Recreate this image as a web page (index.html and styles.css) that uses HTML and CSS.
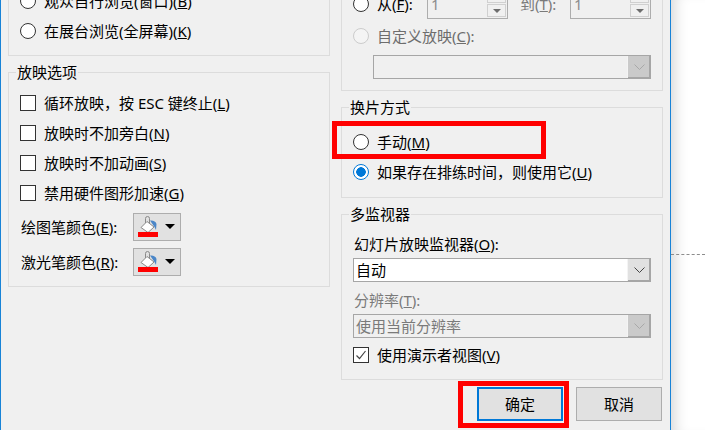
FILE: index.html
```html
<!DOCTYPE html>
<html lang="zh-CN">
<head>
  <meta charset="UTF-8">
  <title>设置放映方式</title>
  <link rel="stylesheet" href="styles.css">
</head>
<body>
  <div class="dialog">
    <div class="columns">
      <div class="col col-left">
        <div class="group group-cut">
          <div class="row"><span class="radio"></span>观众自行浏览(窗口)(<u>B</u>)</div>
          <div class="row"><span class="radio"></span>在展台浏览(全屏幕)(<u>K</u>)</div>
        </div>

        <fieldset class="group">
          <legend>放映选项</legend>
          <div class="inner-options">
            <div class="row"><span class="check"></span>循环放映，按 ESC 键终止(<u>L</u>)</div>
            <div class="row"><span class="check"></span>放映时不加旁白(<u>N</u>)</div>
            <div class="row"><span class="check"></span>放映时不加动画(<u>S</u>)</div>
            <div class="row"><span class="check"></span>禁用硬件图形加速(<u>G</u>)</div>
            <div class="color-row">
              <span class="color-label">绘图笔颜色(<u>E</u>):</span>
              <button class="color-btn">
                <svg class="bucket" width="22" height="23" viewBox="0 0 22 23">
                  <path d="M13 5.500C16 5 19 6.500 19.500 9L19 15L17.500 12Z" fill="#4a86c8"/>
                  <path d="M4 12.500L10 6.500L17 12L11 17.500Z" fill="#fff" stroke="#8a8a8a"/>
                  <path d="M8.500 8V3.500a2 2 0 0 1 4 0V8" fill="none" stroke="#8a8a8a"/>
                  <rect x="1" y="17" width="20" height="5" fill="#f00"/>
                </svg>
                <span class="caret"></span>
              </button>
            </div>
            <div class="color-row">
              <span class="color-label">激光笔颜色(<u>R</u>):</span>
              <button class="color-btn">
                <svg class="bucket" width="22" height="23" viewBox="0 0 22 23">
                  <path d="M13 5.500C16 5 19 6.500 19.500 9L19 15L17.500 12Z" fill="#4a86c8"/>
                  <path d="M4 12.500L10 6.500L17 12L11 17.500Z" fill="#fff" stroke="#8a8a8a"/>
                  <path d="M8.500 8V3.500a2 2 0 0 1 4 0V8" fill="none" stroke="#8a8a8a"/>
                  <rect x="1" y="17" width="20" height="5" fill="#f00"/>
                </svg>
                <span class="caret"></span>
              </button>
            </div>
          </div>
        </fieldset>
      </div>

      <div class="col col-right">
        <div class="group group-cut">
          <div class="row">
            <span class="radio"></span><span class="range-label">从(<u>F</u>):</span>
            <span class="spin"><span class="spin-val">1</span><span class="spin-btns"><i class="spin-up"></i><i class="spin-down"></i></span></span>
            <span class="range-to off">到(<u>T</u>):</span>
            <span class="spin"><span class="spin-val">1</span><span class="spin-btns"><i class="spin-up"></i><i class="spin-down"></i></span></span>
          </div>
          <div class="row row-custom"><span class="radio radio-off"></span>自定义放映(<u>C</u>):</div>
          <div class="select select-off select-indent">
            <span class="select-val"></span>
            <span class="select-arrow"><svg width="11" height="6" viewBox="0 0 11 6"><path d="M.5.500L5.500 5.500L10.500.500" fill="none" stroke="#a8a8a8"/></svg></span>
          </div>
        </div>

        <fieldset class="group">
          <legend>换片方式</legend>
          <div class="inner-switch">
            <div class="row"><span class="radio"></span>手动(<u>M</u>)</div>
            <div class="row"><span class="radio radio-on"></span>如果存在排练时间，则使用它(<u>U</u>)</div>
          </div>
        </fieldset>

        <fieldset class="group">
          <legend>多监视器</legend>
          <div class="inner-monitor">
            <div class="field-label">幻灯片放映监视器(<u>O</u>):</div>
            <div class="select">
              <span class="select-val">自动</span>
              <span class="select-arrow"><svg width="11" height="6" viewBox="0 0 11 6"><path d="M.5.500L5.500 5.500L10.500.500" fill="none" stroke="#444"/></svg></span>
            </div>
            <div class="field-label field-off off">分辨率(<u>T</u>):</div>
            <div class="select select-off">
              <span class="select-val">使用当前分辨率</span>
              <span class="select-arrow"><svg width="11" height="6" viewBox="0 0 11 6"><path d="M.5.500L5.500 5.500L10.500.500" fill="none" stroke="#a8a8a8"/></svg></span>
            </div>
            <div class="row row-presenter">
              <span class="check"><svg width="14" height="14" viewBox="0 0 14 14"><path d="M2.500 7.500L5.500 10.500L11.500 3" fill="none" stroke="#444" stroke-width="1.200"/></svg></span>使用演示者视图(<u>V</u>)
            </div>
          </div>
        </fieldset>
      </div>
    </div>

    <div class="actions">
      <button class="btn btn-default">确定</button>
      <button class="btn">取消</button>
    </div>

    <div class="mark mark-manual"></div>
    <div class="mark mark-ok"></div>
  </div>

  <div class="behind"><div class="dash"></div></div>
</body>
</html>
```

FILE: styles.css
```css
html, body {
  height: 100%;
}
body {
  margin: 0;
  display: flex;
  overflow: hidden;
  background: #fff;
  color: #000;
  font-family: "Noto Sans", "Noto Sans CJK SC", sans-serif;
  font-size: 15px;
  line-height: 22px;
}
u {
  text-underline-offset: 1px;
}
.off {
  color: #7a7a7a;
}

/* dialog */
.dialog {
  position: relative;
  width: 671px;
  height: 430px;
  box-sizing: border-box;
  flex: none;
  overflow: hidden;
  background: #f0f0f0;
  border-left: 1px solid #1883d7;
  border-right: 1px solid #1883d7;
  z-index: 1;
}
.behind {
  flex: 1;
  padding-top: 254px;
  box-shadow: inset 14px 0 14px -10px rgba(0,0,0,0.16);
}
.dash {
  border-top: 1px dashed #8c8c8c;
}
.columns {
  display: flex;
  gap: 11px;
  padding-left: 7px;
}
.col {
  width: 322px;
  display: flex;
  flex-direction: column;
  gap: 5px;
}
.col-left {
  margin-top: -14px;
}
.col-right {
  margin-top: -11px;
}

/* group boxes */
.group {
  margin: 0;
  padding: 0;
  min-width: 0;
  border: 1px solid #dcdcdc;
}
.group legend {
  margin-left: 7px;
  padding: 0 1px;
  height: 22px;
}
.group-cut {
  border-top: 0;
  padding: 0 11px 9px;
}
.inner-options {
  padding: 5px 11px 10px;
}
.inner-switch {
  padding: 9px 11px 10px;
}
.inner-monitor {
  padding: 4px 11px 9px;
}

/* rows */
.row {
  display: flex;
  align-items: center;
  height: 30px;
  white-space: nowrap;
}
.radio, .check {
  flex: none;
  box-sizing: border-box;
  width: 16px;
  height: 16px;
  margin-right: 8px;
  border: 1px solid #333;
}
.radio {
  border-radius: 50%;
  background: #fff;
}
.radio-on {
  border-color: #0078d7;
  background: radial-gradient(circle, #0078d7 0 4.500px, #fff 5px);
}
.radio-off {
  border-color: #ccc;
  background: #f4f4f4;
}
.check {
  background: #fff;
  display: flex;
  align-items: center;
  justify-content: center;
}

/* pen colours */
.color-row {
  display: flex;
  align-items: center;
  height: 28px;
  margin-top: 5px;
}
.color-row + .color-row {
  margin-top: 7px;
}
.color-label {
  width: 112px;
  padding-left: 1px;
}
.color-btn {
  box-sizing: border-box;
  width: 48px;
  height: 28px;
  padding: 0 0 0 3px;
  display: flex;
  align-items: flex-start;
  background: #e1e1e1;
  border: 1px solid #adadad;
}
.bucket {
  display: block;
  margin-top: 1px;
}
.caret {
  margin: 10px 0 0 6px;
  border-left: 5px solid transparent;
  border-right: 5px solid transparent;
  border-top: 5px solid #000;
}

/* range + spin boxes */
.range-label {
  width: 50px;
}
.range-to {
  width: 50px;
  margin-left: 12px;
}
.spin {
  flex: none;
  box-sizing: border-box;
  width: 81px;
  height: 30px;
  display: flex;
  justify-content: space-between;
  align-items: flex-end;
  border: 1px solid #adadad;
  border-top: 0;
  padding: 0 1px 1px 3px;
}
.spin-val {
  color: #8c8c8c;
  line-height: 20px;
  padding-bottom: 3px;
}
.spin-btns {
  width: 19px;
  display: flex;
  flex-direction: column;
  gap: 1px;
}
.spin-btns i {
  display: block;
  box-sizing: border-box;
  border: 1px solid #d0d0d0;
  background: #f0f0f0;
}
.spin-up {
  height: 14px;
}
.spin-down {
  height: 13px;
  position: relative;
}
.spin-down::after {
  content: "";
  position: absolute;
  left: 5px;
  top: 4px;
  border-left: 4px solid transparent;
  border-right: 4px solid transparent;
  border-top: 4px solid #6d6d6d;
}
.row-custom {
  margin-top: 2px;
  color: #6d6d6d;
}

/* combo boxes */
.select {
  box-sizing: border-box;
  width: 298px;
  height: 24px;
  display: flex;
  align-items: stretch;
  background: #fff;
  border: 1px solid #a6a6a6;
}
.select-val {
  flex: 1;
  padding-left: 2px;
  line-height: 22px;
}
.select-arrow {
  width: 22px;
  display: flex;
  align-items: center;
  justify-content: center;
  background: #e1e1e1;
  border-left: 1px solid #f4f4f4;
  box-shadow: inset -1px -1px 0 #a6a6a6;
}
.select-off {
  background: #f0f0f0;
  color: #7a7a7a;
}
.select-off .select-arrow {
  background: #cacaca;
}
.select-indent {
  width: 278px;
  margin: 4px 0 2px 20px;
}
.field-label {
  height: 22px;
  margin: 4px 0 3px 1px;
}
.field-off {
  margin: 7px 0 3px 1px;
}
.row-presenter {
  margin-top: 2px;
}

/* buttons */
.actions {
  display: flex;
  justify-content: flex-end;
  gap: 13px;
  margin-top: 7px;
  padding-right: 8px;
}
.btn {
  box-sizing: border-box;
  width: 86px;
  height: 34px;
  padding: 0;
  background: #e1e1e1;
  border: 1px solid #adadad;
  color: #000;
  font: inherit;
}
.btn-default {
  border: 2px solid #0078d7;
}

/* red callouts */
.mark {
  position: absolute;
  box-sizing: border-box;
  border: 5px solid #f00;
}
.mark-manual {
  left: 331px;
  top: 121px;
  width: 214px;
  height: 38px;
}
.mark-ok {
  left: 457px;
  top: 381px;
  width: 111px;
  height: 47px;
}
```
